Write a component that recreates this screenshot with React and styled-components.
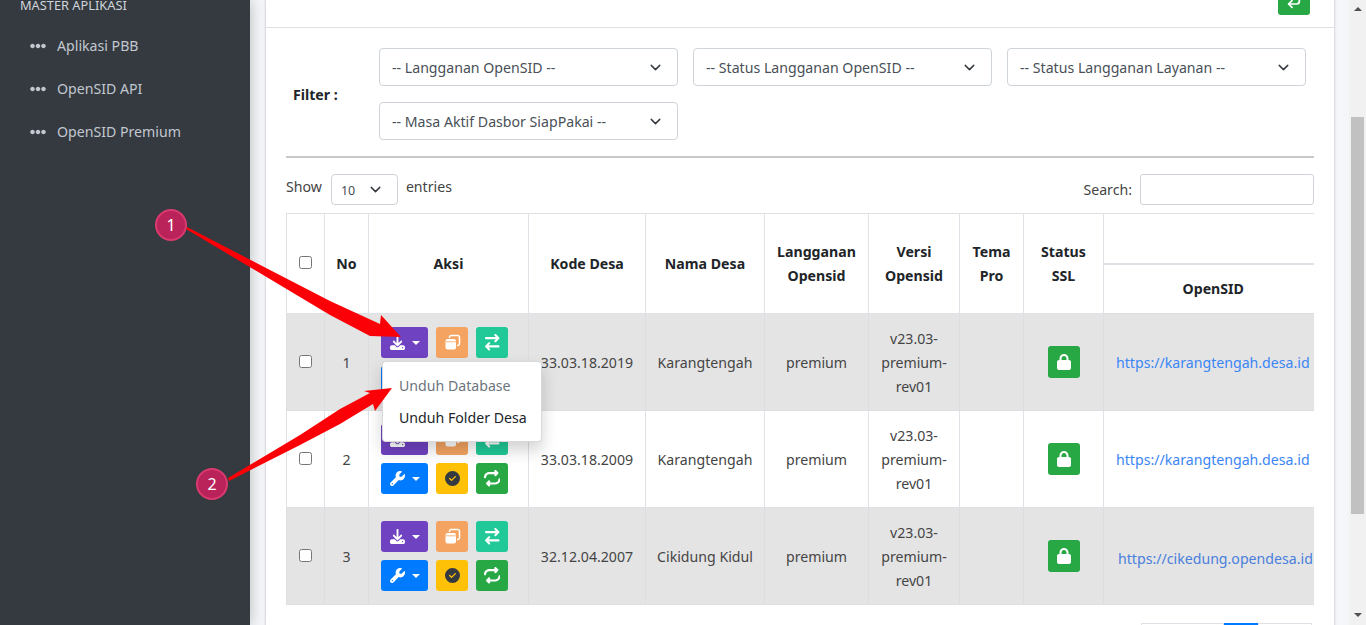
import React from 'react';
import styled, { createGlobalStyle } from 'styled-components';
import { FaEllipsisH } from 'react-icons/fa';
import {
  FaDownload,
  FaArrowRightArrowLeft,
  FaWrench,
  FaCircleCheck,
  FaRepeat,
  FaLock,
} from 'react-icons/fa6';
import { LuChevronDown, LuCornerDownLeft } from 'react-icons/lu';

const GlobalStyle = createGlobalStyle`
  html, body {
    margin: 0;
    height: 100%;
    overflow: hidden;
    background: #f4f6f9;
    color: #212529;
    font-family: "Noto Sans", "Liberation Sans", sans-serif;
    font-size: 14.15px;
    line-height: 24px;
  }
  * { box-sizing: border-box; }
`;

const Page = styled.div`
  position: relative;
  display: flex;
  width: 1366px;
  height: 625px;
  overflow: hidden;
`;

const Sidebar = styled.aside`
  flex: 0 0 250px;
  background: #343a40;
  box-shadow: 0 0 14px rgba(0, 0, 0, 0.25);
  padding: 0 0 0 20px;
  color: #c2c7d0;
`;

const SideHeader = styled.div`
  margin-top: -7px;
  height: 24px;
  font-size: 12.8px;
  color: #d0d4db;
`;

const SideItem = styled.div`
  display: flex;
  align-items: center;
  gap: 11px;
  height: 43px;
  padding-left: 10px;
  &:nth-child(2) { margin-top: 7px; }
  svg { font-size: 16px; color: #c2c7d0; }
`;

const Main = styled.main`
  flex: 1;
  min-width: 0;
  padding: 0 15px 0 16px;
`;

const Card = styled.section`
  margin-top: -30px;
  background: #fff;
  box-shadow: 0 0 1px rgba(0, 0, 0, 0.125), 0 1px 3px rgba(0, 0, 0, 0.2);
`;

const CardHeader = styled.header`
  display: flex;
  justify-content: space-between;
  align-items: flex-end;
  height: 58px;
  padding: 0 24px 12px 32px;
  border-bottom: 1px solid #dfdfdf;
`;

const CardTitle = styled.div`
  align-self: flex-start;
  margin-top: 13px;
  color: #d4d4d4;
`;

const BackButton = styled.div`
  display: flex;
  align-items: center;
  justify-content: center;
  width: 32px;
  height: 32px;
  padding-top: 6px;
  border-radius: 3px;
  background: #28a745;
  color: #fff;
  font-size: 16px;
`;

const CardBody = styled.div`
  padding: 20px 20px 0;
`;

const FilterRow = styled.div`
  display: flex;
  align-items: center;
  padding-bottom: 16px;
  border-bottom: 2px solid #c9c9c9;
`;

const FilterLabel = styled.label`
  flex: 0 0 93px;
  padding: 2px 0 0 7px;
  font-weight: 700;
`;

const FilterGrid = styled.div`
  display: flex;
  flex-wrap: wrap;
  gap: 16px 15px;
  width: 930px;
`;

const SelectBox = styled.div`
  display: flex;
  align-items: center;
  justify-content: space-between;
  width: ${(p) => p.$width}px;
  height: ${(p) => p.$height}px;
  padding: 0 13px 0 ${(p) => p.$pad}px;
  border: 1px solid #ced4da;
  border-radius: 4px;
  background: #fff;
  color: #495057;
  font-size: ${(p) => p.$size}px;
  span { padding-top: 2px; }
  svg { font-size: 17px; color: #343a40; }
`;

const TableTools = styled.div`
  display: flex;
  justify-content: space-between;
  margin: 16px 0 8px;
  height: 31px;
`;

const ShowGroup = styled.div`
  display: flex;
  align-items: flex-start;
  gap: 8px;
  padding-top: 1px;
  height: 31px;
  color: #444;
  & > div { margin: -1px 0 0 1px; }
`;

const SearchGroup = styled.div`
  display: flex;
  align-items: center;
  gap: 8px;
  color: #444;
`;

const SearchInput = styled.input`
  width: 174px;
  height: 31px;
  border: 1px solid #ced4da;
  border-radius: 3px;
  background: #fff;
`;

const TableWrap = styled.div`
  width: 1028px;
  overflow: hidden;
`;

const Table = styled.table`
  table-layout: fixed;
  width: 1028px;
  border-collapse: collapse;
  border-top: 1px solid #dee2e6;
`;

const Th = styled.th`
  padding: 0 8px 0 ${(p) => (p.$open ? 16 : 8)}px;
  border: 1px solid #dee2e6;
  border-right-width: ${(p) => (p.$open ? 0 : 1)}px;
  border-top: 0;
  border-bottom-width: ${(p) => (p.$sub ? 0 : 1)}px;
  height: 50px;
  font-weight: 700;
  text-align: center;
`;

const SubHeadRule = styled.th`
  height: 50px;
  padding: 0;
  border: 0;
  border-bottom: 2px solid #dee2e6;
`;

const Row = styled.tr`
  background: ${(p) => (p.$striped ? '#e4e4e5' : '#fff')};
`;

const Td = styled.td`
  position: relative;
  height: 97px;
  padding: ${(p) => (p.$text ? 2 : 0)}px 8px 0;
  border: 1px solid #dee2e6;
  border-right-width: ${(p) => (p.$open ? 0 : 1)}px;
  border-color: ${(p) => (p.$striped ? '#dcdee1' : '#dee2e6')};
  text-align: center;
  color: #444;
`;

const Tick = styled.input.attrs({ type: 'checkbox' })`
  margin: 3px 4px;
`;

const Actions = styled.div`
  display: grid;
  grid-template-columns: 47px 32px 32px;
  grid-auto-rows: 31px;
  gap: 8px;
  width: 127px;
  margin: 0 auto 0 4px;
`;

const ActionButton = styled.div`
  display: flex;
  align-items: center;
  justify-content: center;
  gap: 7px;
  border-radius: 3px;
  background: ${(p) => p.$color};
  color: ${(p) => p.$ink || '#fff'};
  font-size: ${(p) => p.$size || 15}px;
`;

const Caret = styled.span`
  width: 0;
  height: 0;
  border-top: 4px solid #fff;
  border-left: 4px solid transparent;
  border-right: 4px solid transparent;
`;

const LockButton = styled.div`
  display: flex;
  align-items: center;
  justify-content: center;
  width: 32px;
  height: 32px;
  margin: 0 auto 1px;
  border-radius: 3px;
  background: #28a745;
  color: #fff;
  font-size: 16px;
`;

const SiteLink = styled.a`
  display: block;
  margin: ${(p) => p.$drop}px 0 0 ${(p) => p.$indent}px;
  white-space: nowrap;
  color: ${(p) => p.$color};
`;

const Dropdown = styled.div`
  position: absolute;
  z-index: 3;
  top: 47px;
  left: 13px;
  width: 160px;
  height: 81px;
  padding: 8px 0;
  border: 1px solid rgba(0, 0, 0, 0.15);
  border-radius: 4px;
  background: #fff;
  box-shadow: 0 8px 16px rgba(0, 0, 0, 0.18);
  text-align: left;
`;

const DropdownItem = styled.div`
  height: 32px;
  padding-left: 16px;
  line-height: 32px;
  white-space: nowrap;
  color: ${(p) => (p.$muted ? '#6c757d' : '#212529')};
`;

const Pagination = styled.div`
  display: flex;
  justify-content: flex-end;
  margin: 18px 2px 0 0;
  height: 38px;
`;

const PageLink = styled.div`
  display: flex;
  justify-content: center;
  width: ${(p) => p.$width}px;
  padding-top: 7px;
  border: 1px solid #dee2e6;
  border-color: ${(p) => (p.$active ? '#007bff' : '#dee2e6')};
  background: ${(p) => (p.$active ? '#007bff' : '#fff')};
  color: ${(p) => (p.$active ? '#fff' : '#6c757d')};
`;

const ScrollTrack = styled.div`
  flex: 0 0 17px;
  display: flex;
  flex-direction: column;
  align-items: center;
  background: #f1f1f1;
`;

const ScrollArrow = styled.span`
  width: 0;
  height: 0;
  margin: ${(p) => (p.$down ? 'auto 0 8px' : '7px 0 0')};
  border-left: 4px solid transparent;
  border-right: 4px solid transparent;
  border-top: ${(p) => (p.$down ? '4px solid #505050' : '0')};
  border-bottom: ${(p) => (p.$down ? '0' : '4px solid #505050')};
`;

const ScrollThumb = styled.div`
  width: 13px;
  height: 397px;
  margin-top: 106px;
  background: #c1c1c1;
`;

const Annotation = styled.svg`
  position: absolute;
  z-index: 5;
  left: 0;
  top: 0;
  pointer-events: none;
`;

const Badge = styled.div`
  position: absolute;
  z-index: 6;
  left: ${(p) => p.$x - 16}px;
  top: ${(p) => p.$y - 16}px;
  display: flex;
  align-items: center;
  justify-content: center;
  width: 32px;
  height: 32px;
  border: 2px solid #dc3a6e;
  border-radius: 50%;
  background: #b9235a;
  color: #fff;
  font-size: 16px;
`;

const villages = [
  { no: 1, kode: '33.03.18.2019', nama: 'Karangtengah', url: 'https://karangtengah.desa.id', indent: 4, drop: 0, color: '#3a86f5', open: true },
  { no: 2, kode: '33.03.18.2009', nama: 'Karangtengah', url: 'https://karangtengah.desa.id', indent: 4, drop: 0, color: '#3a86f5' },
  { no: 3, kode: '32.12.04.2007', nama: 'Cikidung Kidul', url: 'https://cikedung.opendesa.id', indent: 6, drop: 4, color: '#4a7fdc' },
];

// back sheet is only an outline, the front one has a strip across its top
function CloneIcon() {
  return (
    <svg width="17" height="17" viewBox="0 0 17 17">
      <path d="M5.5 4V3.2A1.7 1.7 0 0 1 7.2 1.5h6.6a1.7 1.7 0 0 1 1.7 1.7v6.6a1.7 1.7 0 0 1-1.7 1.7H13" fill="none" stroke="#fff" strokeWidth="1.5" />
      <rect x="1.5" y="5" width="10.5" height="10.5" rx="2" fill="#fff" />
      <path d="M1.5 7.8h10.5" stroke="#f4a460" strokeWidth="0.8" />
    </svg>
  );
}

function ActionSet() {
  return (
    <Actions>
      <ActionButton $color="#6f42c1"><FaDownload /><Caret /></ActionButton>
      <ActionButton $color="#f4a460"><CloneIcon /></ActionButton>
      <ActionButton $color="#20c997" $size={16.5}><FaArrowRightArrowLeft /></ActionButton>
      <ActionButton $color="#007bff"><FaWrench /><Caret /></ActionButton>
      <ActionButton $color="#ffc107" $ink="#343a40"><FaCircleCheck /></ActionButton>
      <ActionButton $color="#28a745" $size={16.5}><FaRepeat /></ActionButton>
    </Actions>
  );
}

function Select({ label, width = 299, height = 38, pad = 12, size = 14.15 }) {
  return (
    <SelectBox $width={width} $height={height} $pad={pad} $size={size}>
      <span>{label}</span>
      <LuChevronDown />
    </SelectBox>
  );
}

export default function App() {
  return (
    <Page>
      <GlobalStyle />
      <Sidebar>
        <SideHeader>MASTER APLIKASI</SideHeader>
        {['Aplikasi PBB', 'OpenSID API', 'OpenSID Premium'].map((name) => (
          <SideItem key={name}><FaEllipsisH />{name}</SideItem>
        ))}
      </Sidebar>

      <Main>
        <Card>
          <CardHeader>
            <CardTitle>Daftar Desa</CardTitle>
            <BackButton><LuCornerDownLeft strokeWidth={2.6} /></BackButton>
          </CardHeader>
          <CardBody>
            <FilterRow>
              <FilterLabel>Filter :</FilterLabel>
              <FilterGrid>
                <Select label="-- Langganan OpenSID --" />
                <Select label="-- Status Langganan OpenSID --" />
                <Select label="-- Status Langganan Layanan --" />
                <Select label="-- Masa Aktif Dasbor SiapPakai --" />
              </FilterGrid>
            </FilterRow>

            <TableTools>
              <ShowGroup>
                Show
                <Select label="10" width={67} height={31} pad={9} size={12.5} />
                entries
              </ShowGroup>
              <SearchGroup>
                Search:
                <SearchInput />
              </SearchGroup>
            </TableTools>

            <TableWrap>
              <Table>
                <colgroup>
                  {[38, 44, 160, 117, 119, 104, 91, 64, 80, 211].map((w, i) => (
                    <col key={i} width={w} />
                  ))}
                </colgroup>
                <thead>
                  <tr>
                    <Th rowSpan={2}><Tick /></Th>
                    <Th rowSpan={2}>No</Th>
                    <Th rowSpan={2}>Aksi</Th>
                    <Th rowSpan={2}>Kode Desa</Th>
                    <Th rowSpan={2}>Nama Desa</Th>
                    <Th rowSpan={2}>Langganan Opensid</Th>
                    <Th rowSpan={2}>Versi Opensid</Th>
                    <Th rowSpan={2}>Tema Pro</Th>
                    <Th rowSpan={2}>Status SSL</Th>
                    <SubHeadRule />
                  </tr>
                  <tr>
                    <Th $open $sub>OpenSID</Th>
                  </tr>
                </thead>
                <tbody>
                  {villages.map((v) => {
                    const striped = v.no % 2 === 1;
                    return (
                      <Row key={v.no} $striped={striped}>
                        <Td $striped={striped} $text><Tick /></Td>
                        <Td $striped={striped} $text>{v.no}</Td>
                        <Td $striped={striped}>
                          <ActionSet />
                          {v.open && (
                            <Dropdown>
                              <DropdownItem $muted>Unduh Database</DropdownItem>
                              <DropdownItem>Unduh Folder Desa</DropdownItem>
                            </Dropdown>
                          )}
                        </Td>
                        <Td $striped={striped} $text>{v.kode}</Td>
                        <Td $striped={striped} $text>{v.nama}</Td>
                        <Td $striped={striped} $text>premium</Td>
                        <Td $striped={striped} $text>v23.03-premium-rev01</Td>
                        <Td $striped={striped} />
                        <Td $striped={striped}><LockButton><FaLock /></LockButton></Td>
                        <Td $striped={striped} $open $text>
                          <SiteLink $indent={v.indent} $drop={v.drop} $color={v.color}>{v.url}</SiteLink>
                        </Td>
                      </Row>
                    );
                  })}
                </tbody>
              </Table>
            </TableWrap>

            <Pagination>
              <PageLink $width={83}>Previous</PageLink>
              <PageLink $width={34} $active>1</PageLink>
              <PageLink $width={54}>Next</PageLink>
            </Pagination>
          </CardBody>
        </Card>
      </Main>

      <ScrollTrack>
        <ScrollArrow />
        <ScrollThumb />
        <ScrollArrow $down />
      </ScrollTrack>

      <Annotation width="1366" height="625" viewBox="0 0 1366 625">
        <polygon fill="#fb0007" points="187,227 330,301 380,324 381,315 401,337 370,336 330,315 186,229" />
        <polygon fill="#fb0007" points="228,478 300,435 340,409 370,393 364,391 392,388 375,411 373,404 340,424 300,445 229,481" />
      </Annotation>
      <Badge $x={171} $y={225}>1</Badge>
      <Badge $x={212} $y={484}>2</Badge>
    </Page>
  );
}
